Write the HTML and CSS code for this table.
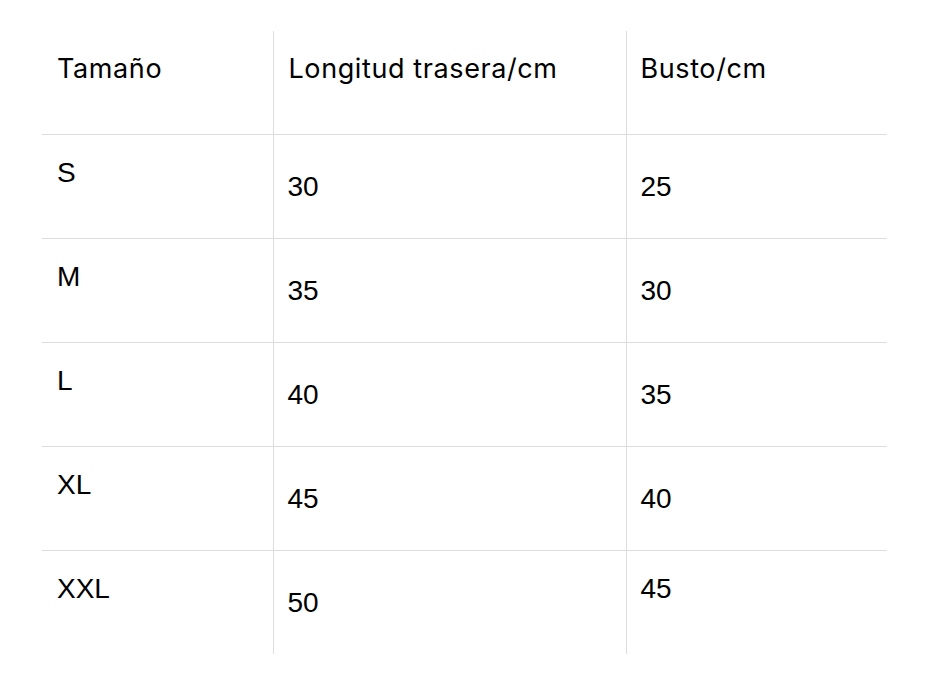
FILE: index.html
```html
<!DOCTYPE html>
<html lang="es">
<head>
<meta charset="utf-8">
<title>Tabla de tallas</title>
<link rel="stylesheet" href="styles.css">
</head>
<body>
<div class="wrap">
<table class="sizes">
  <thead>
    <tr>
      <th class="c1">Tamaño</th>
      <th class="c2">Longitud trasera/cm</th>
      <th class="c3">Busto/cm</th>
    </tr>
  </thead>
  <tbody>
    <tr><td class="top">S</td><td class="low">30</td><td class="low">25</td></tr>
    <tr><td class="top">M</td><td class="low">35</td><td class="low">30</td></tr>
    <tr><td class="top">L</td><td class="low">40</td><td class="low">35</td></tr>
    <tr><td class="top">XL</td><td class="low">45</td><td class="low">40</td></tr>
    <tr><td class="top">XXL</td><td class="low">50</td><td class="top">45</td></tr>
  </tbody>
</table>
</div>
</body>
</html>
```
FILE: styles.css
```css
html, body {
  margin: 0;
  padding: 0;
  background: #ffffff;
}
.wrap {
  padding: 31px 42px 0 42px;
}
.sizes {
  width: 845px;
  border-collapse: collapse;
  table-layout: fixed;
  color: #000;
}
.sizes th, .sizes td {
  vertical-align: top;
  text-align: left;
  padding: 0 0 0 15px;
  box-sizing: border-box;
}
.sizes th + th, .sizes td + td {
  border-left: 1px solid #dddddd;
}
.sizes tbody td {
  border-top: 1px solid #dddddd;
  height: 104px;
}
.sizes th {
  height: 103px;
  font-family: "Inter", "Noto Sans", sans-serif;
  font-weight: 400;
  font-size: 27px;
  letter-spacing: 0.6px;
  line-height: 32px;
  padding-top: 22px;
}
.c1 { width: 231px; }
.c2 { width: 353px; }
.c3 { width: 261px; }
.sizes td {
  font-family: "Liberation Sans", Arial, sans-serif;
  font-size: 28px;
  line-height: 32px;
}
.sizes td.top { padding-top: 22px; }
.sizes td.low { padding-top: 36px; }
.sizes td + td.top { padding-left: 14px; }
.sizes td + td.low { padding-left: 14px; }
.sizes td:nth-child(2) { padding-left: 15px; }
.sizes th.c3 { padding-left: 14px; }
```
